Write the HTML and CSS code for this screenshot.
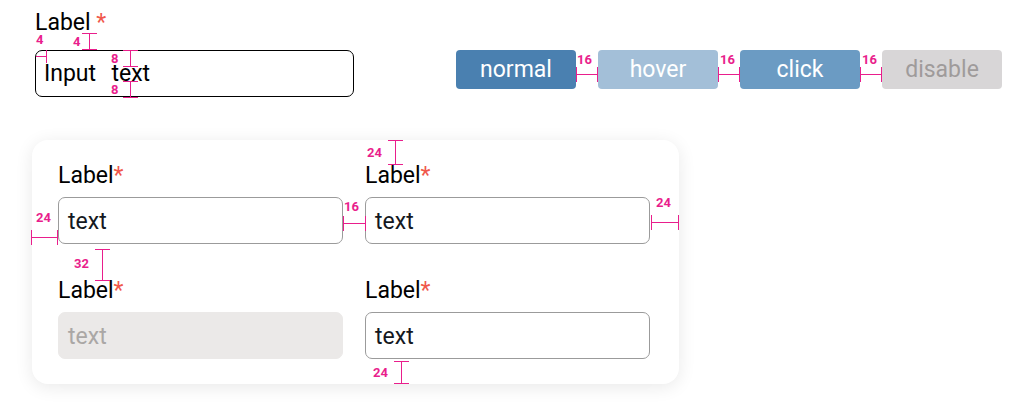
FILE: index.html
```html
<!DOCTYPE html>
<html lang="en">
<head>
<meta charset="utf-8">
<title>Input spec</title>
<link rel="stylesheet" href="styles.css">
</head>
<body>
<div class="page">
  <div class="top">
    <div class="field-top">
      <div class="label-top">Label <span class="req">*</span></div>
      <div class="input-top">Input  text</div>
    </div>
    <div class="buttons">
      <div class="btn btn-normal">normal</div>
      <div class="btn btn-hover">hover</div>
      <div class="btn btn-click">click</div>
      <div class="btn btn-disable">disable</div>
    </div>
  </div>

  <div class="card">
    <div class="cell">
      <div class="card-label">Label<span class="req">*</span></div>
      <div class="card-input">text</div>
    </div>
    <div class="cell">
      <div class="card-label">Label<span class="req">*</span></div>
      <div class="card-input">text</div>
    </div>
    <div class="cell">
      <div class="card-label">Label<span class="req">*</span></div>
      <div class="card-input is-disabled">text</div>
    </div>
    <div class="cell">
      <div class="card-label">Label<span class="req">*</span></div>
      <div class="card-input">text</div>
    </div>
  </div>

  <!-- spec annotations (overlay) -->
  <div class="tick-left"></div>
  <div class="note n-a">4</div>
  <div class="vm vm-a"></div>
  <div class="note n-b">4</div>
  <div class="vm vm-b"></div>
  <div class="note n-c">8</div>
  <div class="vm vm-c"></div>
  <div class="note n-d">8</div>

  <div class="hm hm-b1"></div>
  <div class="note n-b1">16</div>
  <div class="hm hm-b2"></div>
  <div class="note n-b2">16</div>
  <div class="hm hm-b3"></div>
  <div class="note n-b3">16</div>

  <div class="vm vm-ctop"></div>
  <div class="note n-ctop">24</div>
  <div class="hm hm-cleft"></div>
  <div class="note n-cleft">24</div>
  <div class="hm hm-cmid"></div>
  <div class="note n-cmid">16</div>
  <div class="hm hm-cright"></div>
  <div class="note n-cright">24</div>
  <div class="vm vm-crow"></div>
  <div class="note n-crow">32</div>
  <div class="vm vm-cbot"></div>
  <div class="note n-cbot">24</div>
</div>
</body>
</html>
```

FILE: styles.css
```css
* { box-sizing: border-box; }

html, body {
  margin: 0;
  padding: 0;
  background: #ffffff;
}

body {
  font-family: Roboto, "Noto Sans", sans-serif;
  color: #111111;
}

.page {
  position: relative;
  width: 1013px;
  height: 416px;
  overflow: hidden;
}

.req { color: #f0584c; }

/* ---------- top row ---------- */
.top {
  display: flex;
  align-items: flex-start;
  padding: 10px 0 0 35px;
}

.field-top { width: 319px; }

.label-top {
  font-size: 23px;
  line-height: 26px;
  height: 26px;
  margin-bottom: 14px;
  color: #000;
}

.input-top {
  height: 47px;
  border: 1px solid #000;
  border-radius: 7px;
  padding: 0 8px;
  display: flex;
  align-items: center;
  font-size: 23px;
  line-height: 26px;
  color: #000;
  white-space: pre;
  word-spacing: 2px;
}

.buttons {
  display: flex;
  gap: 22px;
  margin: 40px 0 0 102px;
}

.btn {
  width: 120px;
  height: 39px;
  border-radius: 4px;
  display: flex;
  align-items: center;
  justify-content: center;
  font-size: 23px;
  line-height: 26px;
  color: #ffffff;
}

.btn-normal { background: #4a80b0; }
.btn-hover { background: #a3bfd8; }
.btn-click { background: #6b9bc3; }
.btn-disable { background: #d8d6d7; color: #9f9b9b; }

/* ---------- card ---------- */
.card {
  width: 647px;
  margin: 43px 0 0 32px;
  padding: 24px 29px 25px 26px;
  background: #ffffff;
  border-radius: 16px;
  box-shadow: 0 3px 18px rgba(0, 0, 0, 0.09);
  display: grid;
  grid-template-columns: 285px 285px;
  column-gap: 22px;
  row-gap: 35px;
}

.card-label {
  font-size: 23px;
  line-height: 24px;
  margin-bottom: 9px;
  color: #000;
}

.card-input {
  height: 47px;
  border: 1px solid #9b9b9b;
  border-radius: 7px;
  padding: 2px 0 0 9px;
  display: flex;
  align-items: center;
  font-size: 23px;
  line-height: 26px;
  color: #141821;
}

.card-input.is-disabled {
  background: #ebe9e8;
  border-color: #ebe9e8;
  color: #aaa7a5;
}

/* ---------- spec annotations ---------- */
.note {
  position: absolute;
  font-family: Roboto, sans-serif;
  font-weight: 700;
  font-size: 13px;
  line-height: 13px;
  color: #e91e8c;
}

.vm {
  position: absolute;
  width: 15px;
  border-top: 1px solid #e91e8c;
  border-bottom: 1px solid #e91e8c;
  background: linear-gradient(#e91e8c, #e91e8c) no-repeat 7px 0 / 1px 100%;
}

.hm {
  position: absolute;
  height: 15px;
  border-left: 1px solid #e91e8c;
  border-right: 1px solid #e91e8c;
  background: linear-gradient(#e91e8c, #e91e8c) no-repeat 0 7px / 100% 1px;
}

.tick-left {
  position: absolute;
  left: 36px;
  top: 50px;
  width: 11px;
  height: 13px;
  border-right: 1px solid #e91e8c;
  background: linear-gradient(#e91e8c, #e91e8c) no-repeat 0 6px / 100% 1px;
}

.n-a { left: 36px; top: 33px; }
.n-b { left: 73px; top: 35px; }
.n-c { left: 111px; top: 52px; }
.n-d { left: 111px; top: 83px; }

.vm-a { left: 82px; top: 33px; height: 17px; }
.vm-b { left: 123px; top: 50px; height: 17px; }
.vm-c { left: 123px; top: 81px; height: 17px; }

.hm-b1 { left: 576px; top: 67px; width: 22px; }
.hm-b2 { left: 718px; top: 67px; width: 22px; }
.hm-b3 { left: 860px; top: 67px; width: 22px; }
.n-b1 { left: 577px; top: 53px; }
.n-b2 { left: 720px; top: 53px; }
.n-b3 { left: 862px; top: 53px; }

.vm-ctop { left: 388px; top: 140px; height: 25px; }
.n-ctop { left: 367px; top: 146px; }

.hm-cleft { left: 31px; top: 230px; width: 27px; }
.n-cleft { left: 36px; top: 211px; }

.hm-cmid { left: 343px; top: 216px; width: 23px; }
.n-cmid { left: 344px; top: 200px; }

.hm-cright { left: 651px; top: 215px; width: 28px; }
.n-cright { left: 656px; top: 196px; }

.vm-crow { left: 95px; top: 249px; height: 32px; }
.n-crow { left: 74px; top: 257px; }

.vm-cbot { left: 394px; top: 361px; height: 23px; }
.n-cbot { left: 373px; top: 366px; }
```
